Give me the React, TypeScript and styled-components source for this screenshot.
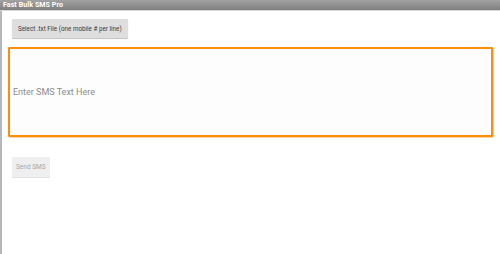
import styled, { createGlobalStyle } from 'styled-components';

const GlobalStyle = createGlobalStyle`
  html, body {
    margin: 0;
    padding: 0;
    background: #ffffff;
  }
  body {
    font-family: Roboto, "Liberation Sans", sans-serif;
  }
`;

const Screen = styled.div`
  width: 500px;
  height: 254px;
  display: flex;
  flex-direction: column;
  overflow: hidden;
`;

const TitleBar = styled.div`
  height: 10px;
  flex-shrink: 0;
  display: flex;
  align-items: center;
  padding-left: 3px;
  background: linear-gradient(#a3a3a3, #7e7e7e);
  border-bottom: 1px solid #d6d6d6;
  color: #ffffff;
  font-size: 7px;
  font-weight: 700;
  letter-spacing: 0.1px;
`;

const Body = styled.div`
  flex: 1;
  display: flex;
  flex-direction: column;
  align-items: flex-start;
  border-left: 2px solid #b4b8bd;
  padding: 8px 7px 0 6px;
`;

const Button = styled.button<{ $disabled?: boolean }>`
  height: 19px;
  padding: 0 6px;
  margin-left: 4px;
  border: none;
  border-radius: 1px;
  font-family: Roboto, "Liberation Sans", sans-serif;
  font-size: 6.3px;
  color: ${(p) => (p.$disabled ? '#a8a8a8' : '#3a3a3a')};
  background: ${(p) => (p.$disabled ? '#efefef' : '#dedede')};
  box-shadow: ${(p) =>
    p.$disabled ? '0 1px 0 #e2e2e2' : '0 1px 1px rgba(0, 0, 0, 0.25)'};
`;

const SmsBox = styled.textarea`
  box-sizing: border-box;
  width: 485px;
  height: 90px;
  margin-top: 9px;
  padding: 0 3px;
  border: 2px solid #ff8c0a;
  border-radius: 1px;
  box-shadow: 1px 1px 0 #ffd6a8;
  background: #fdfdfd;
  resize: none;
  outline: none;
  font-family: Roboto, "Liberation Sans", sans-serif;
  font-size: 9px;
  color: #333;
  line-height: 86px;
  caret-color: #555;
  &::placeholder {
    color: #8c8c8c;
  }
`;

const SendButton = styled(Button)`
  margin-top: 20px;
  height: 20px;
  padding: 0 4px;
  font-size: 6.5px;
`;

export default function App() {
  return (
    <>
      <GlobalStyle />
      <Screen>
        <TitleBar>Fast Bulk SMS Pro</TitleBar>
        <Body>
          <Button>Select .txt File (one mobile # per line)</Button>
          <SmsBox placeholder="Enter SMS Text Here" />
          <SendButton $disabled>Send SMS</SendButton>
        </Body>
      </Screen>
    </>
  );
}
